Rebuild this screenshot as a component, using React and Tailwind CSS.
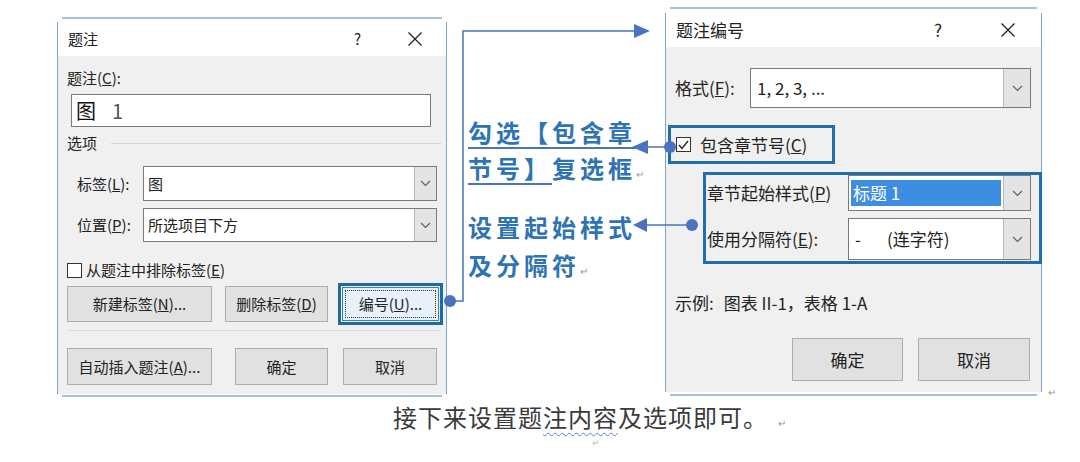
import { Fragment } from 'react'

const font = "font-['Noto_Sans_CJK_SC',sans-serif]"

function Chevron() {
  return (
    <svg width="11" height="7" viewBox="0 0 11 7" fill="none">
      <path d="M1 1 L5.5 5.5 L10 1" stroke="#606060" strokeWidth="1.2" />
    </svg>
  )
}

function CloseIcon() {
  return (
    <svg width="16" height="16" viewBox="0 0 16 16" fill="none">
      <path d="M1.5 1.5 L14.5 14.5 M14.5 1.5 L1.5 14.5" stroke="#222" strokeWidth="1.3" />
    </svg>
  )
}

function Select({ width, height, children, btn = 'w-[22px]' }) {
  return (
    <div className={`flex border border-[#7a7a7a] bg-white ${width} ${height}`}>
      <div className="flex-1 flex items-center min-w-0">{children}</div>
      <div className={`${btn} flex items-center justify-center bg-[#e4e4e4] border-l border-[#b9b9b9]`}>
        <Chevron />
      </div>
    </div>
  )
}

function Btn({ className, children }) {
  return (
    <div className={`flex items-center justify-center bg-[#e1e1e1] border border-[#adadad] text-[#222] ${className}`}>
      {children}
    </div>
  )
}

function TitleBar({ title, q, x, size }) {
  return (
    <div className={`h-[34px] bg-white flex items-center ${size} text-[#222]`}>
      <span className="pl-[10px]">{title}</span>
      <span className={q}>?</span>
      <span className={x}><CloseIcon /></span>
    </div>
  )
}

function CaptionDialog() {
  return (
    <div className="ml-[57px] mt-[17px] w-[390px]">
      <div className="h-[2px] mx-[5px] bg-[#a9c1d4]" />
      <div className="h-[3px]" />
      <div className="border-x border-[#7fa6c9]">
        <TitleBar title="题注" q="ml-[256px]" x="ml-[46px]" size="text-[15px]" />
        <div className="bg-[#f0f0f0] h-[338px] text-[15px] text-[#222] leading-[18px]">
          <div className="pt-[13px] pl-[9px]">题注(<u>C</u>):</div>
          <div className="ml-[13px] mt-[7px] w-[360px] h-[33px] border border-[#7a7a7a] bg-white flex items-center pl-[4px] text-[20px]">
            <span className="text-[#111]">图</span>
            <span className="ml-[16px] text-[#555]">1</span>
          </div>
          <div className="mt-[7px] h-[18px] flex items-center pl-[9px]">
            <span>选项</span>
            <div className="ml-[14px] flex-1 mr-[5px] h-px bg-[#d5d5d5]" />
          </div>
          <div className="mt-[14px] flex items-center">
            <span className="w-[85px] pl-[19px]">标签(<u>L</u>):</span>
            <Select width="w-[294px]" height="h-[35px]">
              <span className="pl-[4px]">图</span>
            </Select>
          </div>
          <div className="mt-[7px] flex items-center">
            <span className="w-[85px] pl-[19px]">位置(<u>P</u>):</span>
            <Select width="w-[294px]" height="h-[34px]">
              <span className="pl-[4px]">所选项目下方</span>
            </Select>
          </div>
          <div className="mt-[20px] h-[16px] flex items-center pl-[9px]">
            <div className="w-[15px] h-[15px] border border-[#333] bg-white" />
            <span className="ml-[4px]">从题注中排除标签(<u>E</u>)</span>
          </div>
          <div className="mt-[5px] h-[42px] flex items-center pl-[9px]">
            <Btn className="w-[145px] h-[36px]">新建标签(<u>N</u>)...</Btn>
            <Btn className="ml-[13px] w-[103px] h-[36px]">删除标签(<u>D</u>)</Btn>
            <div className="ml-[10px] w-[105px] h-[42px] border-[3px] border-[#1c6aa9] p-px">
              <div className="h-full border border-[#3c7fc0] bg-[#e8f1fa] p-[2px]">
                <div className="h-full border border-dotted border-[#333] flex items-center justify-center">
                  编号(<u>U</u>)...
                </div>
              </div>
            </div>
          </div>
          <div className="mt-[5px] ml-[9px] mr-[5px] h-px bg-[#dadada]" />
          <div className="mt-[17px] flex items-center pl-[9px]">
            <Btn className="w-[145px] h-[37px]">自动插入题注(<u>A</u>)...</Btn>
            <Btn className="ml-[23px] w-[93px] h-[37px]">确定</Btn>
            <Btn className="ml-[15px] w-[94px] h-[37px]">取消</Btn>
          </div>
        </div>
      </div>
      <div className="h-px" />
      <div className="h-[2px] mx-[5px] bg-[#a9c1d4]" />
    </div>
  )
}

function NumberingDialog() {
  return (
    <div className="ml-[21px] mt-[7px] w-[377px]">
      <div className="h-[2px] mx-[5px] bg-[#a9c1d4]" />
      <div className="h-[4px]" />
      <div className="border-x border-[#7fa6c9]">
        <TitleBar title="题注编号" q="ml-[190px]" x="ml-[58px]" size="text-[17px]" />
        <div className="bg-[#f0f0f0] h-[345px] text-[17px] text-[#222] leading-[20px]">
          <div className="pt-[21px] flex items-center">
            <span className="w-[84px] pl-[9px]">格式(<u>F</u>):</span>
            <Select width="w-[281px]" height="h-[40px]" btn="w-[27px]">
              <span className="pl-[6px]">1, 2, 3, ...</span>
            </Select>
          </div>
          <div className="mt-[17px] ml-[2px] w-[167px] h-[39px] border-[3px] border-[#1f6eb0] flex items-center pl-[5px]">
            <div className="w-[15px] h-[15px] border border-[#333] bg-white flex items-center justify-center">
              <svg width="11" height="10" viewBox="0 0 11 10" fill="none">
                <path d="M1 5 L4 8.5 L10 1" stroke="#222" strokeWidth="1.4" />
              </svg>
            </div>
            <span className="ml-[9px]">包含章节号(<u>C</u>)</span>
          </div>
          <div className="mt-[8px] ml-[37px] w-[339px] h-[92px] border-[3px] border-[#1f6eb0]">
            <div className="flex items-center">
              <span className="w-[142px] pl-px">章节起始样式(<u>P</u>)</span>
              <Select width="w-[183px]" height="h-[36px]" btn="w-[27px]">
                <div className="ml-[2px] mr-[2px] flex-1 h-[26px] bg-[#3d8ee0] text-white flex items-center pl-[2px]">标题 1</div>
              </Select>
            </div>
            <div className="mt-[7px] flex items-center">
              <span className="w-[142px] pl-px">使用分隔符(<u>E</u>):</span>
              <Select width="w-[183px]" height="h-[42px]" btn="w-[27px]">
                <span className="pl-[6px]">-</span>
                <span className="ml-[26px]">(连字符)</span>
              </Select>
            </div>
          </div>
          <div className="mt-[29px] pl-[9px] h-[20px] flex items-center">
            <span>示例:</span>
            <span className="ml-[10px]">图表 II-1，表格 1-A</span>
          </div>
          <div className="mt-[25px] flex">
            <Btn className="ml-[126px] w-[111px] h-[43px]">确定</Btn>
            <Btn className="ml-[15px] w-[112px] h-[43px]">取消</Btn>
          </div>
        </div>
      </div>
      <div className="h-[2px]" />
      <div className="h-[2px] mx-[5px] bg-[#a9c1d4]" />
    </div>
  )
}

function Notes() {
  return (
    <div className="ml-[21px] mt-[114px] w-[176px] text-[24px] font-bold tracking-[4px] text-[#2e74b5] whitespace-nowrap">
      <div className="leading-[36px]">
        <span className="underline decoration-[#4a72c0] decoration-2 underline-offset-[5px]">勾选【包含章</span>
      </div>
      <div className="leading-[36px]">
        <span className="underline decoration-[#4a72c0] decoration-2 underline-offset-[5px]">节号】</span>
        <span>复选框</span>
        <span className="text-[10px] font-normal text-[#999] tracking-normal">↵</span>
      </div>
      <div className="mt-[16px] leading-[38px]">设置起始样式</div>
      <div className="leading-[38px]">
        及分隔符<span className="text-[10px] font-normal text-[#999] tracking-normal">↵</span>
      </div>
    </div>
  )
}

function Connectors() {
  const c = '#4a72c0'
  return (
    <svg className="absolute inset-0 pointer-events-none" width="1080" height="462">
      <path d="M450 301 H463 V31 H636" stroke={c} strokeWidth="1.5" fill="none" />
      <path d="M634 24 L650 31 L634 38 Z" fill={c} />
      <circle cx="450" cy="301" r="6" fill={c} />
      <path d="M670 147 H646" stroke={c} strokeWidth="1.5" />
      <path d="M632 147 L648 140 L648 154 Z" fill={c} />
      <circle cx="670" cy="147" r="6" fill={c} />
      <path d="M692 225 H645" stroke={c} strokeWidth="1.5" />
      <path d="M633 225 L647 218 L647 232 Z" fill={c} />
      <circle cx="692" cy="225" r="6" fill={c} />
    </svg>
  )
}

export default function App() {
  return (
    <div className={`relative w-[1080px] h-[462px] bg-white overflow-hidden ${font}`}>
      <div className="flex items-start">
        <CaptionDialog />
        <Notes />
        <NumberingDialog />
        <span className="mt-[384px] ml-[6px] text-[10px] text-[#999]">↵</span>
      </div>
      <div className="mt-[3px] pl-[393px] text-[24px] leading-[30px] tracking-[1px] text-[#3a3a3a] font-normal">
        接下来设置题
        <span className="underline decoration-wavy decoration-[#5b7fd6] decoration-1 underline-offset-[5px]">注内容</span>
        及选项即可。
        <span className="ml-[10px] text-[10px] text-[#999]">↵</span>
      </div>
      <div className="pl-[592px] text-[9px] leading-[10px] text-[#bbb]">↵</div>
      <Connectors />
    </div>
  )
}
